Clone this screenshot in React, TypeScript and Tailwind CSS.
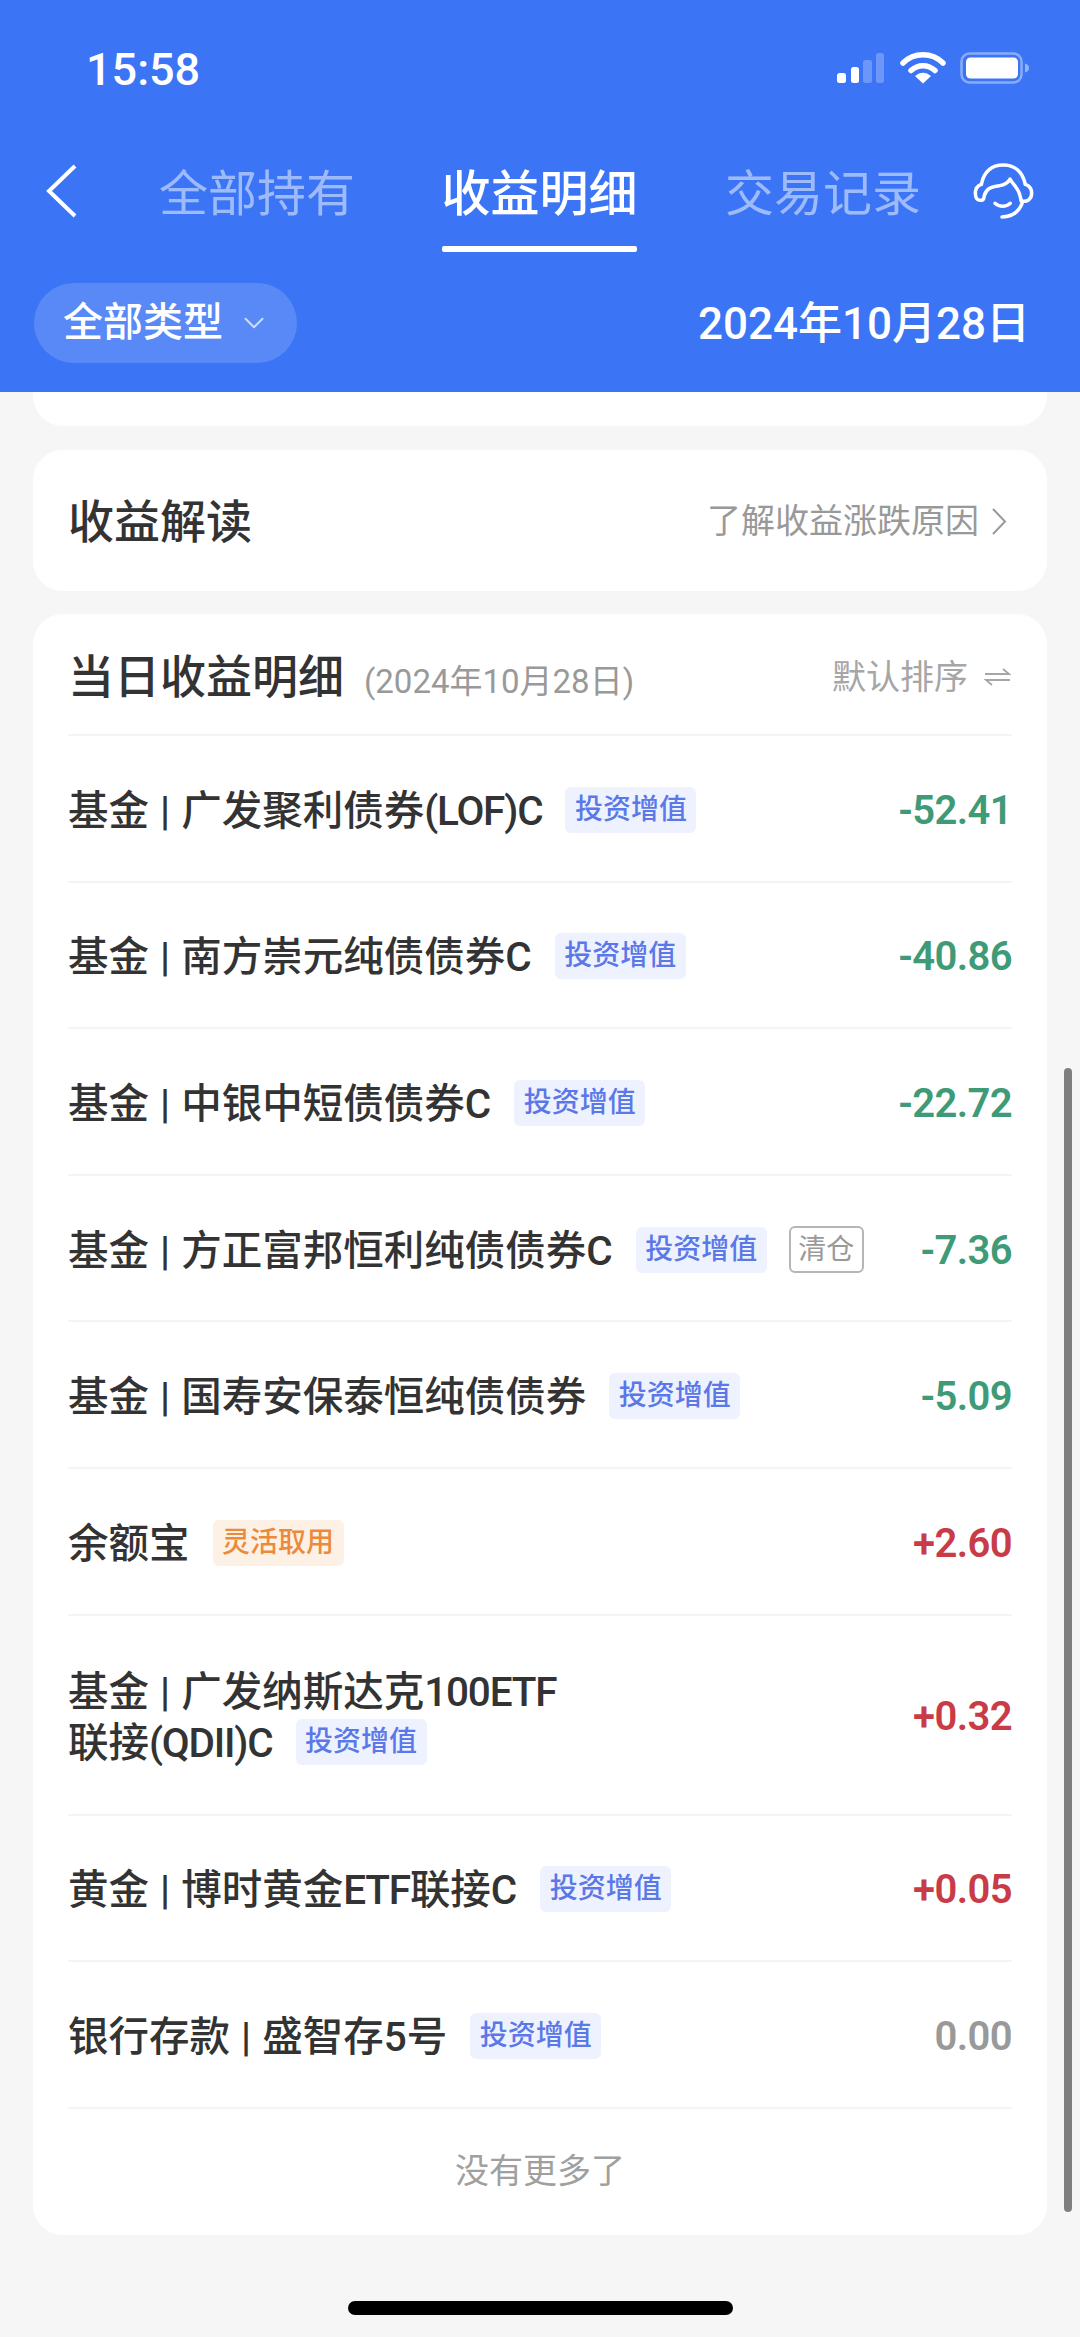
import { ChevronDown } from "lucide-react";

type Row = {
  name: string;
  second?: string;
  tag: "grow" | "flex";
  closed?: boolean;
  amount: string;
};

const rows: Row[] = [
  { name: "基金 | 广发聚利债券(LOF)C", tag: "grow", amount: "-52.41" },
  { name: "基金 | 南方崇元纯债债券C", tag: "grow", amount: "-40.86" },
  { name: "基金 | 中银中短债债券C", tag: "grow", amount: "-22.72" },
  { name: "基金 | 方正富邦恒利纯债债券C", tag: "grow", closed: true, amount: "-7.36" },
  { name: "基金 | 国寿安保泰恒纯债债券", tag: "grow", amount: "-5.09" },
  { name: "余额宝", tag: "flex", amount: "+2.60" },
  { name: "基金 | 广发纳斯达克100ETF", second: "联接(QDII)C", tag: "grow", amount: "+0.32" },
  { name: "黄金 | 博时黄金ETF联接C", tag: "grow", amount: "+0.05" },
  { name: "银行存款 | 盛智存5号", tag: "grow", amount: "0.00" },
];

function amountColor(a: string) {
  if (a.startsWith("-")) return "text-[#3f9a78]";
  if (a.startsWith("+")) return "text-[#c93b47]";
  return "text-[#999999]";
}

function Tag({ kind }: { kind: Row["tag"] }) {
  if (kind === "flex") {
    return (
      <span className="flex h-[46px] w-[131px] shrink-0 items-center justify-center rounded-[6px] bg-[#fdf1e6] text-[28px] font-medium text-[#ec8a3c]">
        灵活取用
      </span>
    );
  }
  return (
    <span className="flex h-[46px] w-[131px] shrink-0 items-center justify-center rounded-[6px] bg-[#eef2fe] text-[28px] font-medium text-[#5b78e8]">
      投资增值
    </span>
  );
}

// longer latin runs sit tighter than the CJK around them
function Name({ text }: { text: string }) {
  const parts = text.split(/(\(?[A-Z0-9]{2,}\)?C?)/);
  return (
    <span className="pt-[2px] text-[40.5px] font-medium leading-[46px] [word-spacing:1px]">
      {parts.map((p, i) =>
        i % 2 === 1 ? (
          <span key={i} className="tracking-[-1.2px]">
            {p}
          </span>
        ) : (
          p
        ),
      )}
    </span>
  );
}

function StatusIcons() {
  return (
    <div className="flex items-center">
      <svg width="50" height="34" viewBox="0 0 50 34" className="mr-[15px]">
        <rect x="2" y="21" width="9" height="10" rx="2.5" fill="#fff" />
        <rect x="16" y="15" width="8" height="16" rx="2.5" fill="#fff" />
        <rect x="28" y="8" width="9" height="23" rx="2.5" fill="#fff" fillOpacity="0.25" />
        <rect x="41" y="1" width="8" height="30" rx="2.5" fill="#fff" fillOpacity="0.25" />
      </svg>
      <svg width="46" height="34" viewBox="0 0 46 34" className="mr-[14px]">
        <path d="M3 11 C14 0 32 0 43 11" fill="none" stroke="#fff" strokeWidth="5.5" strokeLinecap="round" />
        <path d="M11 18.5 C18 12 28 12 35 18.5" fill="none" stroke="#fff" strokeWidth="5.5" strokeLinecap="round" />
        <path d="M15 24 C20 19.5 26 19.5 31 24 L23 31.5 Z" fill="#fff" />
      </svg>
      <svg width="70" height="34" viewBox="0 0 70 34">
        <rect x="1.5" y="1.5" width="60" height="29" rx="8" fill="none" stroke="#fff" strokeOpacity="0.4" strokeWidth="2.5" />
        <rect x="6" y="5.5" width="52" height="21" rx="4.5" fill="#fff" />
        <path d="M65 11.5 C68 12.5 69 14 69 16 C69 18 68 19.5 65 20.5 Z" fill="#fff" fillOpacity="0.45" />
      </svg>
    </div>
  );
}

function Headset() {
  return (
    <svg width="80" height="70" viewBox="0 0 240 210" fill="none" stroke="#fff" strokeWidth="10.5" strokeLinecap="round" strokeLinejoin="round">
      <path d="M64 88 C72 50 95 30 130 30 C165 30 188 52 196 88" />
      <path d="M64 88 C52 92 46 100 46 115 C46 130 52 137 64 136 C70 136 72 130 73 122 C78 102 92 95 118 92 C134 90 144 84 150 72 C158 88 176 100 180 122 L184 138" />
      <path d="M196 88 C208 92 215 100 215 115 C215 132 202 142 184 138" />
      <path d="M186 146 C176 172 156 185 126 186" />
      <path d="M105 145 C118 157 138 157 151 145" />
    </svg>
  );
}

function SortIcon() {
  return (
    <svg width="27" height="18" viewBox="0 0 27 18" fill="none" stroke="#a6a6a6" strokeWidth="1.8">
      <path d="M1 6 H25 L19 1" />
      <path d="M26 12 H2 L8 17" />
    </svg>
  );
}

export default function App() {
  return (
    <div className="relative flex h-[2337px] w-[1080px] flex-col overflow-hidden bg-[#f6f6f6] font-['Roboto','Noto_Sans_CJK_SC',sans-serif] text-[#333333]">
      {/* blue header */}
      <header className="h-[392px] shrink-0 bg-[#3b75f6] text-white">
        <div className="flex h-[138px] items-center justify-between pl-[86px] pr-[50px]">
          <span className="text-[45px] font-medium leading-none">15:58</span>
          <StatusIcons />
        </div>
        <div className="flex h-[114px] items-start">
          <svg width="32" height="54" viewBox="0 0 32 54" fill="none" stroke="#fff" strokeWidth="4" className="ml-[46px] mt-[26px] shrink-0">
            <path d="M29 2 L3 27 L29 52" />
          </svg>
          <span className="ml-[81px] mt-[25px] w-[196px] text-[49px] leading-[64px] text-white/50">全部持有</span>
          <div className="ml-[87px] flex h-full w-[195px] flex-col items-center justify-between pt-[25px]">
            <span className="whitespace-nowrap text-[49px] font-medium leading-[64px]">收益明细</span>
            <div className="h-[6px] w-full rounded-[2px] bg-white" />
          </div>
          <span className="ml-[88px] mt-[25px] w-[196px] text-[49px] leading-[64px] text-white/50">交易记录</span>
          <div className="ml-[39px] mt-[17px]">
            <Headset />
          </div>
        </div>
        <div className="mt-[31px] flex items-center justify-between pl-[34px] pr-[50px]">
          <div className="flex h-[80px] w-[263px] items-center rounded-full bg-white/15 pl-[29px]">
            <span className="text-[40px] font-medium leading-none">全部类型</span>
            <ChevronDown className="ml-[14px] text-white/70" size={34} strokeWidth={1.4} />
          </div>
          <span className="pt-[2px] text-[44px] font-medium leading-none">2024年10月28日</span>
        </div>
      </header>

      <main className="flex flex-col px-[33px]">
        {/* tail of the scrolled card */}
        <div className="h-[34px] rounded-b-[30px] bg-white" />

        <section className="mt-[24px] flex h-[141px] items-center justify-between rounded-[30px] bg-white pl-[35px] pr-[40px] pt-[2px]">
          <h2 className="text-[46px] font-medium leading-none">收益解读</h2>
          <div className="flex items-center text-[34px] text-[#999999]">
            <span>了解收益涨跌原因</span>
            <svg width="16" height="27" viewBox="0 0 16 27" fill="none" stroke="#999999" strokeWidth="2" className="ml-[12px]">
              <path d="M2 1 L14 13.5 L2 26" />
            </svg>
          </div>
        </section>

        <section className="mt-[23px] rounded-[30px] bg-white px-[35px]">
          <div className="flex h-[120px] items-center justify-between pt-[6px]">
            <div className="flex items-baseline">
              <h2 className="text-[46px] font-medium leading-none">当日收益明细</h2>
              <span className="ml-[20px] text-[33px] leading-none text-[#999999]">(2024年10月28日)</span>
            </div>
            <div className="flex items-center text-[34px] leading-none text-[#a6a6a6]">
              <span>默认排序</span>
              <span className="ml-[16px] mr-[1px]">
                <SortIcon />
              </span>
            </div>
          </div>

          {rows.map((r) => (
            <div
              key={r.name}
              className={`flex items-center justify-between border-t-2 border-[#f4f4f4] pt-[3px] ${r.second ? "h-[200px]" : "h-[146.6px]"}`}
            >
              <div className="flex flex-col gap-[3px]">
                <div className="flex items-center">
                  <Name text={r.name} />
                  {!r.second && (
                    <span className="ml-[23px]">
                      <Tag kind={r.tag} />
                    </span>
                  )}
                  {r.closed && (
                    <span className="ml-[22px] flex h-[47px] w-[75px] items-center justify-center rounded-[6px] border-2 border-[#b5b5b5] text-[28px] text-[#999999]">
                      清仓
                    </span>
                  )}
                </div>
                {r.second && (
                  <div className="flex items-center">
                    <Name text={r.second} />
                    <span className="ml-[23px]">
                      <Tag kind={r.tag} />
                    </span>
                  </div>
                )}
              </div>
              <span className={`pt-[2px] text-[40px] font-semibold leading-none tracking-[-0.6px] ${amountColor(r.amount)}`}>{r.amount}</span>
            </div>
          ))}

          <div className="flex h-[128px] items-center justify-center border-t-2 border-[#f4f4f4] text-[34px] text-[#a0a0a0]">
            没有更多了
          </div>
        </section>
      </main>

      {/* scrollbar and home indicator sit over the page */}
      <div className="absolute left-[1064px] top-[1068px] h-[1144px] w-[8px] rounded-full bg-[#7f7f7f]" />
      <div className="absolute bottom-[22px] left-[348px] h-[14px] w-[385px] rounded-full bg-black" />
    </div>
  );
}
